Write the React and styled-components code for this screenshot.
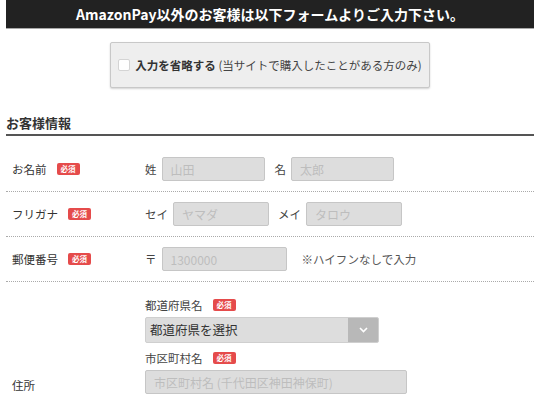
import React from "react";
import styled, { createGlobalStyle } from "styled-components";

const GlobalStyle = createGlobalStyle`
    body {
        margin: 0;
        background: #fff;
        color: #333;
        font-family: "Noto Sans CJK JP", "Noto Sans", sans-serif;
    }
`;

const Page = styled.div`
    padding: 0 6px;
`;

const Banner = styled.div`
    height: 28px;
    line-height: 28px;
    background: #222;
    border-bottom: 1px solid #a8a8a8;
    color: #fff;
    font-size: 14px;
    font-weight: 700;
    text-align: center;
`;

const SkipWrap = styled.div`
    display: flex;
    justify-content: center;
    padding-top: 13px;
`;

const SkipButton = styled.label`
    width: 320px;
    height: 46px;
    box-sizing: border-box;
    display: flex;
    align-items: center;
    justify-content: center;
    gap: 5px;
    background: #eee;
    border: 1px solid #c8c8c8;
    border-radius: 2px;
    box-shadow: 0 1px 2px rgba(0, 0, 0, 0.18);
    font-size: 11.5px;
    color: #444;
`;

const Check = styled.span`
    width: 12px;
    height: 12px;
    box-sizing: border-box;
    background: #fff;
    border: 1px solid #d4d4d4;
    border-radius: 2px;
`;

const Strong = styled.strong`
    font-weight: 700;
    color: #333;
`;

const Heading = styled.h2`
    margin: 26px 0 0;
    font-size: 13px;
    font-weight: 700;
    line-height: 18px;
    padding-bottom: 2px;
    border-bottom: 2px solid #555;
    color: #333;
`;

const Rows = styled.div`
    margin-top: 11px;
`;

const Row = styled.div`
    display: grid;
    grid-template-columns: 139px 1fr;
    align-items: center;
    padding: ${(p) => (p.$tall ? "14px 0 10px" : "10px 0")};
    border-bottom: 1px dotted #aaa;
`;

const Label = styled.div`
    display: flex;
    align-items: center;
    align-self: ${(p) => (p.$bottom ? "end" : "center")};
    gap: 10px;
    padding-left: 6px;
    font-size: 11.5px;
    line-height: 18px;
    color: #333;
`;

const Badge = styled.span`
    display: inline-block;
    height: 12px;
    line-height: 12px;
    padding: 0 4px;
    background: #e54b4b;
    border-radius: 2px;
    color: #fff;
    font-size: 7.5px;
    font-weight: 700;
`;

const Inline = styled.div`
    display: flex;
    align-items: center;
`;

const Part = styled.span`
    font-size: 11.5px;
    color: #444;
    margin: 0 5px 0 ${(p) => p.$lead || 0}px;
`;

const Input = styled.input`
    box-sizing: border-box;
    width: ${(p) => p.$w}px;
    height: 24px;
    padding: 0 8px;
    background: #ddd;
    border: 1px solid #c6c6c6;
    border-radius: 2px;
    font-family: inherit;
    font-size: 12px;
    color: #333;
    outline: none;
    &::placeholder {
        color: #bdbdbd;
    }
`;

const Note = styled.span`
    margin-left: 15px;
    font-size: 11.5px;
    color: #555;
`;

const Fields = styled.div`
    display: flex;
    flex-direction: column;
    gap: 6px;
`;

const Field = styled.div`
    display: flex;
    flex-direction: column;
    gap: 3px;
`;

const FieldLabel = styled.div`
    display: flex;
    align-items: center;
    gap: 10px;
    font-size: 11.5px;
    line-height: 18px;
    color: #444;
`;

const Select = styled.div`
    box-sizing: border-box;
    width: 234px;
    height: 26px;
    display: flex;
    background: #ddd;
    border: 1px solid #cfcfcf;
    border-radius: 2px;
    overflow: hidden;
`;

const SelectText = styled.span`
    flex: 1;
    padding-left: 4px;
    line-height: 24px;
    font-size: 12.5px;
    color: #333;
`;

const SelectArrow = styled.span`
    width: 30px;
    display: flex;
    align-items: center;
    justify-content: center;
    background: #b8b8b8;
`;

const Required = () => <Badge>必須</Badge>;

const App = () => {
    return (
        <Page>
            <GlobalStyle />
            <Banner>AmazonPay以外のお客様は以下フォームよりご入力下さい。</Banner>
            <SkipWrap>
                <SkipButton>
                    <Check />
                    <span>
                        <Strong>入力を省略する</Strong> (当サイトで購入したことがある方のみ)
                    </span>
                </SkipButton>
            </SkipWrap>

            <Heading>お客様情報</Heading>
            <Rows>
                <Row>
                    <Label>
                        お名前 <Required />
                    </Label>
                    <Inline>
                        <Part>姓</Part>
                        <Input $w={103} placeholder="山田" />
                        <Part $lead={10}>名</Part>
                        <Input $w={103} placeholder="太郎" />
                    </Inline>
                </Row>
                <Row>
                    <Label>
                        フリガナ <Required />
                    </Label>
                    <Inline>
                        <Part>セイ</Part>
                        <Input $w={96} placeholder="ヤマダ" />
                        <Part $lead={9}>メイ</Part>
                        <Input $w={96} placeholder="タロウ" />
                    </Inline>
                </Row>
                <Row>
                    <Label>
                        郵便番号 <Required />
                    </Label>
                    <Inline>
                        <Part>〒</Part>
                        <Input $w={125} placeholder="1300000" />
                        <Note>※ハイフンなしで入力</Note>
                    </Inline>
                </Row>
                <Row $tall>
                    <Label $bottom>住所</Label>
                    <Fields>
                        <Field>
                            <FieldLabel>
                                都道府県名 <Required />
                            </FieldLabel>
                            <Select>
                                <SelectText>都道府県を選択</SelectText>
                                <SelectArrow>
                                    <svg width="9" height="6" viewBox="0 0 9 6">
                                        <path
                                            d="M1 1l3.5 3.5L8 1"
                                            fill="none"
                                            stroke="#fff"
                                            strokeWidth="1.6"
                                        />
                                    </svg>
                                </SelectArrow>
                            </Select>
                        </Field>
                        <Field>
                            <FieldLabel>
                                市区町村名 <Required />
                            </FieldLabel>
                            <Input $w={262} placeholder="市区町村名 (千代田区神田神保町)" />
                        </Field>
                    </Fields>
                </Row>
            </Rows>
        </Page>
    );
};

export default App;
